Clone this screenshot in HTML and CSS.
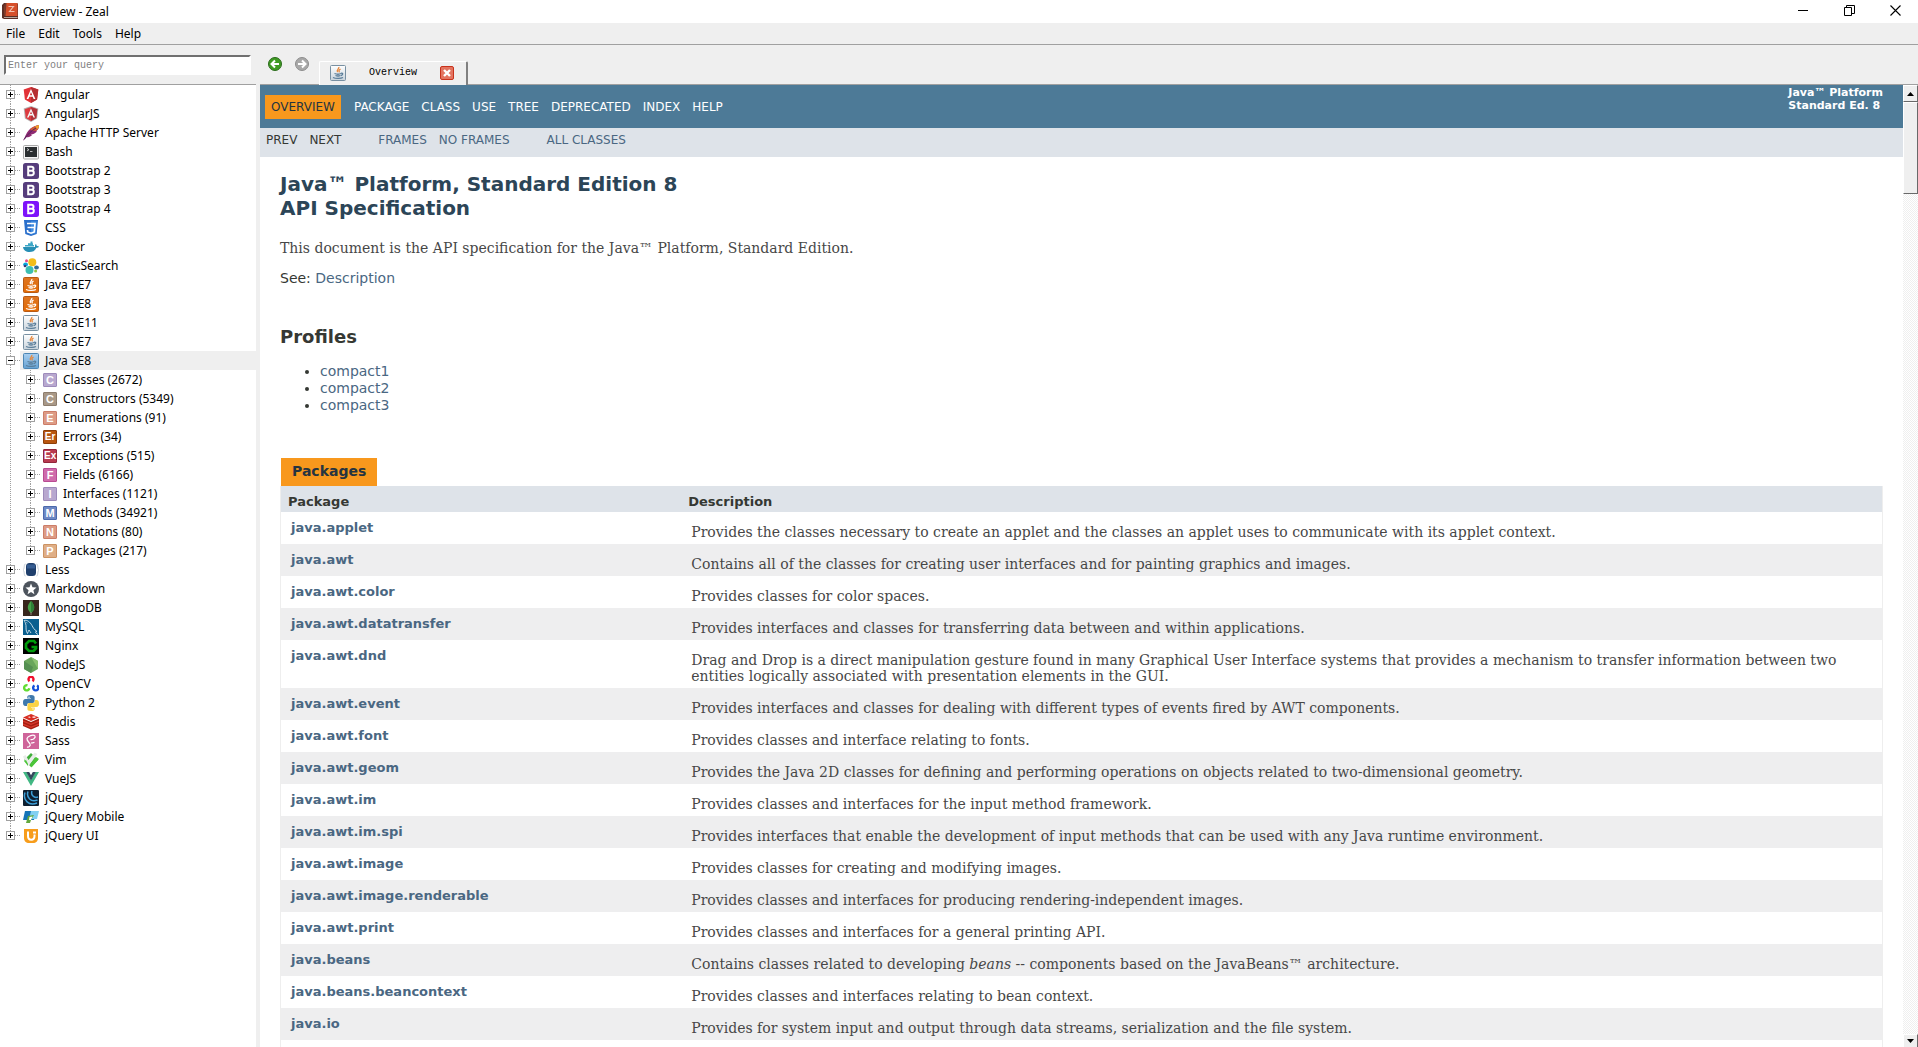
FILE: index.html
```html
<!DOCTYPE html>
<html lang="en">
<head>
<meta charset="utf-8">
<title>Overview - Zeal</title>
<link rel="stylesheet" href="styles.css">
</head>
<body>
<svg class="defs" aria-hidden="true">
  <defs>
    <symbol id="angular" viewBox="0 0 16 16"><path d="M8 0l7.300 2.600-1.200 10L8 16l-6.100-3.400-1.200-10z" fill="#e23237"/><path d="M8 0l7.300 2.600-1.200 10L8 16z" fill="#b52e31"/><path d="M8 2L3.600 12h1.800l.9-2.300h3.400l.9 2.300h1.800zM8 5.200l1.200 3H6.800z" fill="#fff"/></symbol>
    <symbol id="angularjs" viewBox="0 0 16 16"><path d="M8 0l7.300 2.600-1.200 10L8 16l-6.100-3.400-1.200-10z" fill="#b3b3b3"/><path d="M8 1l6.300 2.200-1.100 8.800L8 15l-5.200-3-1.100-8.800z" fill="#dd3b40"/><path d="M8 1l6.300 2.200-1.100 8.800L8 15z" fill="#b13138"/><path d="M8 2.500L4 11.500h1.600l.8-2h3.200l.8 2H12zM8 5.500l1 2.500H7z" fill="#f4f4f4"/></symbol>
    <symbol id="apache" viewBox="0 0 16 16"><path d="M0 16C2 12 3 8 6 5s6-4 10-5c0 3-1 5-3 6l1 .5c-2 2-4 3-6 3l1 .7c-2 1.800-4 2-5.500 2z" fill="#8e2a72"/><path d="M7 4c3-2.500 6-3.500 9-4 0 3-1 5-3 6-2-1-3 1-6-2z" fill="#cf5a35"/><path d="M12 1.500L16 0c0 2-.5 3-1.500 4z" fill="#f0a52a"/><path d="M1 14.500C5 9 8 6 13 3" stroke="#52235d" fill="none"/></symbol>
    <symbol id="bash" viewBox="0 0 16 16"><rect x=".5" y="1.500" width="15" height="13.500" rx="1" fill="#f5f5f5" stroke="#aaa"/><rect x="2" y="3" width="12" height="10" fill="#2b2f31"/><path d="M4 4.500l2 1.200-2 1.200M7 7.500h2.500" stroke="#ddd" stroke-width=".8" fill="none"/></symbol>
    <symbol id="boot" viewBox="0 0 16 16"><rect width="16" height="16" rx="2.500" fill="currentColor"/><path d="M5.200 3.800h3.300c2.600 0 2.600 3.600.4 4 2.700.3 2.500 4.400-.5 4.400H5.200zM5.200 7.800h4" fill="none" stroke="#fff" stroke-width="2"/></symbol>
    <symbol id="css" viewBox="0 0 16 16"><path d="M1 0h14l-1.300 14L8 16l-5.700-2z" fill="#2a6fcb"/><path d="M8 1.200h5.800l-1.200 12L8 14.700z" fill="#3f8ce0"/><path d="M4 3.500h8L11.300 12 8 13.200 4.700 12l-.2-2M4.500 7.500H11" fill="none" stroke="#fff" stroke-width="1.700"/></symbol>
    <symbol id="docker" viewBox="0 0 16 16"><path d="M0 8h12c0-1.500 0-2 .7-3 1 .8 1 1.500 1 2 .8-.2 1.700 0 2.300.4-.6 1-1.500 1.300-2.600 1.300C12 12 9.500 13 6.500 13 3 13 .5 11.500 0 8z" fill="#278fb5"/><path d="M2 6h9v1.600H2zM5 4.200h5V6H5zM7.500 2.500h2v2h-2z" fill="#3ca6c6"/></symbol>
    <symbol id="elastic" viewBox="0 0 16 16"><circle cx="9.300" cy="4.200" r="4" fill="#f4bd19"/><circle cx="6.500" cy="12" r="4" fill="#3cbeb1"/><ellipse cx="2.600" cy="6.500" rx="2.400" ry="2" fill="#07a5de"/><circle cx="3.500" cy="2.800" r="1.500" fill="#e8478b"/><ellipse cx="13.500" cy="9.500" rx="2.400" ry="2" fill="#336b9a"/><circle cx="12.600" cy="13" r="1.500" fill="#93c83e"/><circle cx="2" cy="8" r="1.300" fill="#353b7a"/></symbol>
    <symbol id="cup" viewBox="0 0 16 16"><path d="M8.800 2c.8 1.800-3 2.700-1.200 5M10.500 4c-1.800 1.200-2 1.800-1 3.300" fill="none" stroke="var(--steam)" stroke-width="1.300"/><path d="M4.500 8.500c2 .8 5 .8 6.500 0M5.500 10.500c1.600.6 3.500.6 5 0M11 8.300c2.500-.8 2 1.600 0 2.300M3 12.500c2.500 1.200 8 1.200 10 0" fill="none" stroke="var(--cup)" stroke-width="1.300"/></symbol>
    <linearGradient id="gee" x2="0" y2="1"><stop stop-color="#dd7522"/><stop offset="1" stop-color="#e36b04"/></linearGradient>
    <linearGradient id="gse" x2="0" y2="1"><stop stop-color="#fff"/><stop offset="1" stop-color="#c8d3dc"/></linearGradient>
    <linearGradient id="gsel" x2="0" y2="1"><stop stop-color="#a9cff0"/><stop offset="1" stop-color="#65a1d2"/></linearGradient>
    <symbol id="jee" viewBox="0 0 16 16"><rect x=".5" y=".5" width="15" height="15" rx="1" fill="url(#gee)" stroke="#b85a14"/><use href="#cup"/></symbol>
    <symbol id="jse" viewBox="0 0 16 16"><rect x=".5" y=".5" width="15" height="15" rx="1" fill="url(#gse)" stroke="#7890a2"/><use href="#cup"/></symbol>
    <symbol id="jsel" viewBox="0 0 16 16"><rect x=".5" y=".5" width="15" height="15" rx="1" fill="url(#gsel)" stroke="#4d86b4"/><use href="#cup"/></symbol>
    <symbol id="less" viewBox="0 0 16 16"><path d="M2.500 2C.5 2 2 7-.2 8 2 9 .5 14 2.500 14M13.500 2c2 0 .5 5 2.700 6-2.200 1-.7 6-2.700 6" fill="none" stroke="#c3ccd5"/><rect x="3" y="1" width="10" height="13" rx="3.500" fill="#1f3f6c"/><path d="M4 2.500h8v4H4z" fill="#365d92"/></symbol>
    <symbol id="markdown" viewBox="0 0 16 16"><circle cx="8" cy="8" r="8" fill="#4d545d"/><path d="M8 2.500l1.500 3.800 4 .3-3.100 2.600 1 4L8 11l-3.400 2.200 1-4-3.100-2.600 4-.3z" fill="#fff"/></symbol>
    <symbol id="mongo" viewBox="0 0 16 16"><path d="M0 0h16v16H0z" fill="#38271d"/><path d="M8 1c5 5 3.500 9.500 0 12C4.500 10.500 3 6 8 1z" fill="#47a248"/><path d="M8 1c5 5 3.500 9.500 0 12z" fill="#2f8137"/><path d="M8 12v3" stroke="#b8a99a" stroke-width=".7"/></symbol>
    <symbol id="mysql" viewBox="0 0 16 16"><path d="M0 0h16v16H0z" fill="#0a5f8f"/><path d="M1 1.500c3-1 6 1.500 8 5 1 2 2 4 5 6-1.500 0-2 .3-1 1.500l2 1.500M1 1.500c1 1.500 1.700 2.500 2 5 .2 2-.5 5 1.500 8C5 13 5.500 12 6 11c1 1 1 2 2 3M3.500 3.500l.8.500" fill="none" stroke="#d5e5ee" stroke-width=".9"/></symbol>
    <symbol id="nginx" viewBox="0 0 16 16"><path d="M0 0h16v16H0z"/><path d="M13 5.500L11 3H6L3 6v4l3 3h4.500L13 10.500V9H8.500" fill="none" stroke="#009c0c" stroke-width="2.700"/></symbol>
    <symbol id="node" viewBox="0 0 16 16"><path d="M8 0l7 4v8l-7 4-7-4V4z" fill="#6aa65b"/><path d="M8 0l7 4v8z" fill="#8cc271"/><path d="M1 4v8l7 4 2-6z" fill="#559052"/></symbol>
    <symbol id="opencv" viewBox="0 0 16 16"><g fill="none" stroke-width="2.400"><path d="M6.500 5.200a2.500 2.500 0 1 1 3 0" stroke="#f00f2c"/><path d="M4.500 9.300a2.600 2.600 0 1 0 1.800 3" stroke="#62dc32"/><path d="M11.500 9.500a2.600 2.600 0 1 0 2.500 0" stroke="#1450da"/></g></symbol>
    <symbol id="python" viewBox="0 0 16 16"><path d="M8 0c3 0 3.600 1 3.600 2.300V6c0 1.300-.8 2-2 2H6C4.500 8 4 9 4 11H2.400C.6 11 0 9.500 0 7.500S.7 4 2.500 4H8v-.6H4.300V2.300C4.300.8 5 0 8 0z" fill="#3f79ac"/><path d="M8 16c-3 0-3.600-1-3.600-2.300V10c0-1.300.8-2 2-2H10c1.500 0 2-1 2-3h1.600C15.400 5 16 6.500 16 8.500S15.300 12 13.500 12H8v.6h3.700v1.100C11.700 15.200 11 16 8 16z" fill="#fbd345"/><circle cx="6" cy="2.200" r=".7" fill="#fff"/><circle cx="10" cy="14" r=".7" fill="#fff"/></symbol>
    <symbol id="redis" viewBox="0 0 16 16"><path d="M0 4.500L8 8l8-3.500V12l-8 3.500L0 12z" fill="#a41e11"/><path d="M0 3.500L8 0l8 3.500L8 7z" fill="#d82c20"/><path d="M0 7l8 3.400L16 7M0 10l8 3.400 8-3.400" fill="none" stroke="#d9382c" stroke-width="1.200"/><path d="M4.500 3l3 1L7 2.600zM9.500 2.500h3v1.200h-3z" fill="#fff"/></symbol>
    <symbol id="sass" viewBox="0 0 16 16"><path d="M0 0h16v16H0z" fill="#cf649a"/><path d="M4 14c1.500.5 4-1.200 3-3S3.600 7.500 4 5.500C4.600 3 10.500 1 12 3c1 1.700-2.500 4.200-4.500 3.500M8 10c1 0 2-.2 3.500-.8" fill="none" stroke="#fff" stroke-width="1.200"/></symbol>
    <symbol id="vim" viewBox="0 0 16 16"><path d="M8 1l7 7-7 7-7-7z" fill="#3fae3a"/><path d="M0 4.500L2.500 3l3 5L11.500.5 14.500 2 6 13.500H4.500z" fill="#e9ece9"/><path d="M1 9l2-1 2 4v2zM7 12.500L13 5l3 2-7.500 8.500z" fill="#4cc63a"/></symbol>
    <symbol id="vue" viewBox="0 0 16 16"><path d="M0 1h3.500L8 9l4.500-8H16L8 15z" fill="#41b883"/><path d="M3.200 1h3L8 4.200 9.800 1h3L8 9.500z" fill="#35495e"/></symbol>
    <symbol id="jq" viewBox="0 0 16 16"><rect width="16" height="16" rx="1" fill="#0e1f30"/><path d="M2 2.500C-.5 10 6 16.500 14 13M5 1.500C3 7.500 8 12.500 14.500 10M9 1C7.500 5 11 8.500 15 7" fill="none" stroke="#3d9fd8" stroke-width="1.500"/></symbol>
    <symbol id="jqm" viewBox="0 0 16 16"><path d="M2 2h11l-2 9H0z" fill="#1474b8"/><path d="M8 2h8l-2 8H6z" fill="#83d0f2"/><path d="M5 7l6-1-3 5-1 3H3z" fill="#62a83c"/><path d="M6.500 8l3-.5L8 11H6z" fill="#fff"/></symbol>
    <symbol id="jqui" viewBox="0 0 16 16"><path d="M1 1h14v9c0 3-2 5-5 5H6c-3 0-5-2-5-5z" fill="#f79d1c"/><path d="M5 3.500V8c0 5 6.500 5 6.500 0V6.500" fill="none" stroke="#fff" stroke-width="2"/><path d="M10 3.500h3v2h-3z" fill="#fff"/></symbol>
    <symbol id="zeal" viewBox="0 0 16 17"><path d="M2 0h13l1 1v15H2L0 15V2z" fill="#5c2f26"/><path d="M3 0h12.500v13H2z" fill="#d6502b"/><path d="M3 0h1.500L3.500 13H2z" fill="#74392c"/><path d="M2 14h13.500v1H2z" fill="#b9a79c"/><path d="M6.500 3.500h5L7.500 8.500h5" fill="none" stroke="#f3c3b0" stroke-width="1.100"/></symbol>
  </defs>
</svg>

<header class="titlebar">
  <svg class="app-icon"><use href="#zeal"/></svg>
  <span class="title">Overview - Zeal</span>
  <div class="window-buttons">
    <button aria-label="Minimize"><svg viewBox="0 0 11 11"><path d="M0 5.500h10" stroke="#000"/></svg></button>
    <button aria-label="Restore"><svg viewBox="0 0 11 11"><path d="M.5 2.500h7v8h-7zM2.500 2.500v-2h8v8h-3" fill="none" stroke="#000"/></svg></button>
    <button aria-label="Close"><svg viewBox="0 0 11 11"><path d="M.5.5l10 10M10.500.5l-10 10" stroke="#000" stroke-width="1.100"/></svg></button>
  </div>
</header>
<nav class="menubar" aria-label="Menu">
  <button>File</button><button>Edit</button><button>Tools</button><button>Help</button>
</nav>

<div class="workspace">
  <aside class="sidebar">
    <div class="search"><input type="text" placeholder="Enter your query" aria-label="Search"></div>
    <ul class="tree">
      <li><div class="row"><button class="exp" aria-label="Expand"></button><svg class="ico"><use href="#angular"/></svg><span>Angular</span></div></li>
      <li><div class="row"><button class="exp" aria-label="Expand"></button><svg class="ico"><use href="#angularjs"/></svg><span>AngularJS</span></div></li>
      <li><div class="row"><button class="exp" aria-label="Expand"></button><svg class="ico"><use href="#apache"/></svg><span>Apache HTTP Server</span></div></li>
      <li><div class="row"><button class="exp" aria-label="Expand"></button><svg class="ico"><use href="#bash"/></svg><span>Bash</span></div></li>
      <li><div class="row"><button class="exp" aria-label="Expand"></button><svg class="ico boot-old"><use href="#boot"/></svg><span>Bootstrap 2</span></div></li>
      <li><div class="row"><button class="exp" aria-label="Expand"></button><svg class="ico boot-old"><use href="#boot"/></svg><span>Bootstrap 3</span></div></li>
      <li><div class="row"><button class="exp" aria-label="Expand"></button><svg class="ico boot-new"><use href="#boot"/></svg><span>Bootstrap 4</span></div></li>
      <li><div class="row"><button class="exp" aria-label="Expand"></button><svg class="ico"><use href="#css"/></svg><span>CSS</span></div></li>
      <li><div class="row"><button class="exp" aria-label="Expand"></button><svg class="ico"><use href="#docker"/></svg><span>Docker</span></div></li>
      <li><div class="row"><button class="exp" aria-label="Expand"></button><svg class="ico"><use href="#elastic"/></svg><span>ElasticSearch</span></div></li>
      <li><div class="row"><button class="exp" aria-label="Expand"></button><svg class="ico ee"><use href="#jee"/></svg><span>Java EE7</span></div></li>
      <li><div class="row"><button class="exp" aria-label="Expand"></button><svg class="ico ee"><use href="#jee"/></svg><span>Java EE8</span></div></li>
      <li><div class="row"><button class="exp" aria-label="Expand"></button><svg class="ico"><use href="#jse"/></svg><span>Java SE11</span></div></li>
      <li><div class="row"><button class="exp" aria-label="Expand"></button><svg class="ico"><use href="#jse"/></svg><span>Java SE7</span></div></li>
      <li><div class="row selected"><button class="exp open" aria-label="Collapse"></button><svg class="ico"><use href="#jsel"/></svg><span>Java SE8</span></div>
        <ul>
          <li><div class="row"><button class="exp" aria-label="Expand"></button><i class="kind lilac">C</i><span>Classes (2672)</span></div></li>
          <li><div class="row"><button class="exp" aria-label="Expand"></button><i class="kind taupe">C</i><span>Constructors (5349)</span></div></li>
          <li><div class="row"><button class="exp" aria-label="Expand"></button><i class="kind salmon">E</i><span>Enumerations (91)</span></div></li>
          <li><div class="row"><button class="exp" aria-label="Expand"></button><i class="kind brown">Er</i><span>Errors (34)</span></div></li>
          <li><div class="row"><button class="exp" aria-label="Expand"></button><i class="kind crimson">Ex</i><span>Exceptions (515)</span></div></li>
          <li><div class="row"><button class="exp" aria-label="Expand"></button><i class="kind pink">F</i><span>Fields (6166)</span></div></li>
          <li><div class="row"><button class="exp" aria-label="Expand"></button><i class="kind lilac">I</i><span>Interfaces (1121)</span></div></li>
          <li><div class="row"><button class="exp" aria-label="Expand"></button><i class="kind blue">M</i><span>Methods (34921)</span></div></li>
          <li><div class="row"><button class="exp" aria-label="Expand"></button><i class="kind salmon">N</i><span>Notations (80)</span></div></li>
          <li><div class="row"><button class="exp" aria-label="Expand"></button><i class="kind sand">P</i><span>Packages (217)</span></div></li>
        </ul>
      </li>
      <li><div class="row"><button class="exp" aria-label="Expand"></button><svg class="ico"><use href="#less"/></svg><span>Less</span></div></li>
      <li><div class="row"><button class="exp" aria-label="Expand"></button><svg class="ico"><use href="#markdown"/></svg><span>Markdown</span></div></li>
      <li><div class="row"><button class="exp" aria-label="Expand"></button><svg class="ico"><use href="#mongo"/></svg><span>MongoDB</span></div></li>
      <li><div class="row"><button class="exp" aria-label="Expand"></button><svg class="ico"><use href="#mysql"/></svg><span>MySQL</span></div></li>
      <li><div class="row"><button class="exp" aria-label="Expand"></button><svg class="ico"><use href="#nginx"/></svg><span>Nginx</span></div></li>
      <li><div class="row"><button class="exp" aria-label="Expand"></button><svg class="ico"><use href="#node"/></svg><span>NodeJS</span></div></li>
      <li><div class="row"><button class="exp" aria-label="Expand"></button><svg class="ico"><use href="#opencv"/></svg><span>OpenCV</span></div></li>
      <li><div class="row"><button class="exp" aria-label="Expand"></button><svg class="ico"><use href="#python"/></svg><span>Python 2</span></div></li>
      <li><div class="row"><button class="exp" aria-label="Expand"></button><svg class="ico"><use href="#redis"/></svg><span>Redis</span></div></li>
      <li><div class="row"><button class="exp" aria-label="Expand"></button><svg class="ico"><use href="#sass"/></svg><span>Sass</span></div></li>
      <li><div class="row"><button class="exp" aria-label="Expand"></button><svg class="ico"><use href="#vim"/></svg><span>Vim</span></div></li>
      <li><div class="row"><button class="exp" aria-label="Expand"></button><svg class="ico"><use href="#vue"/></svg><span>VueJS</span></div></li>
      <li><div class="row"><button class="exp" aria-label="Expand"></button><svg class="ico"><use href="#jq"/></svg><span>jQuery</span></div></li>
      <li><div class="row"><button class="exp" aria-label="Expand"></button><svg class="ico"><use href="#jqm"/></svg><span>jQuery Mobile</span></div></li>
      <li><div class="row"><button class="exp" aria-label="Expand"></button><svg class="ico"><use href="#jqui"/></svg><span>jQuery UI</span></div></li>
    </ul>
  </aside>

  <section class="viewer">
    <div class="tabs">
      <button class="nav" aria-label="Back"><svg viewBox="0 0 14 14"><circle cx="7" cy="7" r="6.500" fill="#3f9a24" stroke="#2b6b1c"/><path d="M11 7H4M7 3.500L3.500 7 7 10.500" fill="none" stroke="#fff" stroke-width="2"/></svg></button>
      <button class="nav" aria-label="Forward"><svg viewBox="0 0 14 14"><circle cx="7" cy="7" r="6.500" fill="#a8a8a8" stroke="#8d8d8d"/><path d="M3 7h7M7 3.500L10.500 7 7 10.500" fill="none" stroke="#fff" stroke-width="2"/></svg></button>
      <div class="tab">
        <svg class="ico"><use href="#jse"/></svg>
        <span>Overview</span>
        <button class="close" aria-label="Close tab"><svg viewBox="0 0 14 14"><rect x=".5" y=".5" width="13" height="13" rx="1.500" fill="#e37460" stroke="#c8321c"/><path d="M4 4l6 6M10 4l-6 6" stroke="#fff" stroke-width="2.400"/></svg></button>
      </div>
    </div>
    <div class="view">
      <main class="doc">
        <nav class="topnav">
          <ul>
            <li class="current">Overview</li><li>Package</li><li>Class</li><li>Use</li><li><a href="#tree">Tree</a></li><li><a href="#deprecated">Deprecated</a></li><li><a href="#index">Index</a></li><li><a href="#help">Help</a></li>
          </ul>
          <strong>Java™ Platform<br>Standard Ed. 8</strong>
        </nav>
        <nav class="subnav">
          <ul><li>Prev</li><li>Next</li></ul>
          <ul><li><a href="#frames">Frames</a></li><li><a href="#noframes">No Frames</a></li></ul>
          <ul><li><a href="#all">All Classes</a></li></ul>
        </nav>
        <div class="body">
          <h1>Java™ Platform, Standard Edition 8<br>API Specification</h1>
          <p class="block">This document is the API specification for the Java™ Platform, Standard Edition.</p>
          <p class="see">See: <a href="#description">Description</a></p>
          <h2>Profiles</h2>
          <ul class="profiles">
            <li><a href="#compact1">compact1</a></li>
            <li><a href="#compact2">compact2</a></li>
            <li><a href="#compact3">compact3</a></li>
          </ul>
          <table>
            <caption><span>Packages</span></caption>
            <thead><tr><th>Package</th><th>Description</th></tr></thead>
            <tbody>
              <tr><td><a href="#p1">java.applet</a></td><td>Provides the classes necessary to create an applet and the classes an applet uses to communicate with its applet context.</td></tr>
              <tr><td><a href="#p2">java.awt</a></td><td>Contains all of the classes for creating user interfaces and for painting graphics and images.</td></tr>
              <tr><td><a href="#p3">java.awt.color</a></td><td>Provides classes for color spaces.</td></tr>
              <tr><td><a href="#p4">java.awt.datatransfer</a></td><td>Provides interfaces and classes for transferring data between and within applications.</td></tr>
              <tr><td><a href="#p5">java.awt.dnd</a></td><td>Drag and Drop is a direct manipulation gesture found in many Graphical User Interface systems that provides a mechanism to transfer information between two entities logically associated with presentation elements in the GUI.</td></tr>
              <tr><td><a href="#p6">java.awt.event</a></td><td>Provides interfaces and classes for dealing with different types of events fired by AWT components.</td></tr>
              <tr><td><a href="#p7">java.awt.font</a></td><td>Provides classes and interface relating to fonts.</td></tr>
              <tr><td><a href="#p8">java.awt.geom</a></td><td>Provides the Java 2D classes for defining and performing operations on objects related to two-dimensional geometry.</td></tr>
              <tr><td><a href="#p9">java.awt.im</a></td><td>Provides classes and interfaces for the input method framework.</td></tr>
              <tr><td><a href="#p10">java.awt.im.spi</a></td><td>Provides interfaces that enable the development of input methods that can be used with any Java runtime environment.</td></tr>
              <tr><td><a href="#p11">java.awt.image</a></td><td>Provides classes for creating and modifying images.</td></tr>
              <tr><td><a href="#p12">java.awt.image.renderable</a></td><td>Provides classes and interfaces for producing rendering-independent images.</td></tr>
              <tr><td><a href="#p13">java.awt.print</a></td><td>Provides classes and interfaces for a general printing API.</td></tr>
              <tr><td><a href="#p14">java.beans</a></td><td>Contains classes related to developing <em>beans</em> -- components based on the JavaBeans™ architecture.</td></tr>
              <tr><td><a href="#p15">java.beans.beancontext</a></td><td>Provides classes and interfaces relating to bean context.</td></tr>
              <tr><td><a href="#p16">java.io</a></td><td>Provides for system input and output through data streams, serialization and the file system.</td></tr>
              <tr><td></td><td></td></tr>
            </tbody>
          </table>
        </div>
      </main>
      <div class="scrollbar">
        <button aria-label="Scroll up"><svg viewBox="0 0 7 4"><path d="M0 4h7L3.500 0z"/></svg></button>
        <div class="thumb"></div>
        <div class="track"></div>
        <button class="down" aria-label="Scroll down"><svg viewBox="0 0 7 4"><path d="M0 0h7L3.500 4z"/></svg></button>
      </div>
    </div>
  </section>
</div>
</body>
</html>
```
FILE: styles.css
```css
* { box-sizing: border-box; }

html, body { height: 100%; }

body {
  margin: 0;
  display: flex;
  flex-direction: column;
  overflow: hidden;
  background: #efefef;
  color: #000;
  font: 12px/16px "Noto Sans", sans-serif;
}

button {
  padding: 0;
  border: 0;
  background: none;
  color: inherit;
  font: inherit;
}

ul { margin: 0; padding: 0; list-style: none; }
a { color: #4a6782; text-decoration: none; }
svg { display: block; }
.defs { position: absolute; width: 0; height: 0; }

/* Window frame */
.titlebar {
  display: flex;
  align-items: center;
  height: 23px;
  flex: none;
  padding-left: 2px;
  background: #fff;
}
.app-icon { width: 16px; height: 17px; }
.title { margin-left: 5px; }
.window-buttons { display: flex; align-self: flex-start; margin-left: auto; }
.window-buttons button { width: 46px; height: 21px; display: grid; place-items: center; }
.window-buttons svg { width: 11px; height: 11px; }

.menubar {
  display: flex;
  gap: 13px;
  flex: none;
  height: 22px;
  padding: 0 6px;
  border-bottom: 1px solid #a0a0a0;
}

.workspace {
  display: grid;
  grid-template-columns: 256px minmax(0, 1fr);
  column-gap: 4px;
  flex: 1;
  min-height: 0;
}

/* Docset tree */
.sidebar { display: flex; flex-direction: column; min-height: 0; }
.search { height: 39px; flex: none; padding: 10px 5px 0 4px; }
.search input {
  display: block;
  width: 100%;
  height: 20px;
  padding: 0 2px;
  border: 2px solid;
  border-color: #707070 #fff #fff #707070;
  background: #fff;
  font: 10px/14px "Liberation Mono", monospace;
}
.search input::placeholder { color: #7f7f7f; opacity: 1; }

.tree {
  flex: 1;
  overflow: hidden;
  border-top: 1px solid #a0a0a0;
  background: #fff;
}
.tree li {
  background: repeating-linear-gradient(#a0a0a0 0 1px, transparent 1px 2px) 10px 0 / 1px 100% no-repeat;
}
.tree li li { margin-left: 20px; }
.tree li:last-child { background-size: 1px 9px; }
.row { display: flex; align-items: center; height: 19px; padding-left: 6px; }
.row span { margin-left: 6px; white-space: nowrap; }
.selected { background: linear-gradient(#efefef, #efefef) 20px 0 no-repeat; }
.exp {
  width: 9px;
  height: 9px;
  border: 1px solid #a0a0a0;
  background:
    linear-gradient(#000, #000) center / 5px 1px no-repeat,
    linear-gradient(#000, #000) center / 1px 5px no-repeat,
    #fff;
}
.exp.open { background: linear-gradient(#000, #000) center / 5px 1px no-repeat, #fff; }
.exp::after { content: ""; display: block; width: 5px; margin-left: 8px; border-top: 1px dotted #a0a0a0; }
.ico { width: 16px; height: 16px; flex: none; margin-left: 8px; --steam: #e8873a; --cup: #5a7d99; }
.ee { --steam: #fff; --cup: #fff; }
.boot-old { color: #563d7c; }
.boot-new { color: #7d12fa; }

.kind {
  width: 14px;
  height: 14px;
  margin-left: 8px;
  border: 1px solid;
  border-radius: 1px;
  color: #fff;
  font: bold 11px/12px "Liberation Sans", sans-serif;
  text-align: center;
}
.lilac { background: #b8a8cf; border-color: #9d8bbb; }
.taupe { background: #a89887; border-color: #8d7d6d; }
.salmon { background: #dd9b85; border-color: #cc7d68; }
.brown { background: #b8560f; border-color: #8d3f08; font-size: 10px; }
.crimson { background: #b83a50; border-color: #92263b; font-size: 10px; }
.pink { background: #cf6bab; border-color: #b84b92; }
.blue { background: #6d88c4; border-color: #4b69ac; }
.sand { background: #dfae86; border-color: #cc9262; }

/* Tab strip */
.viewer { display: flex; flex-direction: column; min-width: 0; min-height: 0; }
.tabs { display: flex; height: 40px; flex: none; padding-left: 8px; background: linear-gradient(#a0a0a0, #a0a0a0) bottom / 100% 1px no-repeat; }
.nav { align-self: flex-start; margin: 12px 13px 0 0; }
.nav svg, .close svg { width: 14px; height: 14px; }
.tab {
  display: flex;
  align-items: center;
  width: 149px;
  margin: 16px 0 0 -3px;
  padding: 0 12px 1px 2px;
  border: solid #fff;
  border-width: 1px 2px 0 1px;
  border-right-color: #808080;
  border-radius: 2px 2px 0 0;
  background: #efefef;
  font: 10px/14px "Liberation Mono", monospace;
}
.tab span { flex: 1; text-align: center; }

/* Documentation page */
.view { display: flex; flex: 1; min-height: 0; }
.doc {
  flex: 1;
  min-width: 0;
  overflow: hidden;
  background: #fff;
  color: #353833;
  font: 14px/17px "DejaVu Sans", sans-serif;
}
.topnav {
  display: flex;
  justify-content: space-between;
  height: 43px;
  padding-left: 5px;
  background: #4d7a97;
  color: #fff;
  font-size: 12px;
  line-height: 14px;
  text-transform: uppercase;
}
.topnav ul { display: flex; padding-top: 10px; }
.topnav li { height: 24px; padding: 5px 6px; }
.topnav .current { margin-right: 7px; background: #f8981d; color: #253441; }
.topnav a { color: #fff; }
.topnav strong { padding: 1px 20px 0 0; font-size: 11px; line-height: 13px; text-transform: none; }
.subnav {
  display: flex;
  gap: 25px;
  height: 29px;
  background: #dee3e9;
  font-size: 12px;
  line-height: 14px;
  text-transform: uppercase;
}
.subnav ul { display: flex; }
.subnav li { padding: 5px 6px; }

.body { padding: 15px 20px 0; }
h1 { margin: 0 0 20px; color: #2c4557; font-size: 20px; line-height: 24px; }
h2 { margin: 0 0 15px; font-size: 18px; line-height: 22px; }
p { margin: 0; }
.block { margin-bottom: 14px; color: #474747; font-family: "DejaVu Serif", serif; line-height: 16px; }
.see { margin-bottom: 39px; }
.profiles { margin-bottom: 44px; padding-left: 40px; list-style: disc; }

table {
  width: 100%;
  table-layout: fixed;
  border-collapse: separate;
  border-spacing: 0;
  border: solid #eee;
  border-width: 0 1px;
}
caption { text-align: left; }
caption span {
  display: inline-block;
  height: 28px;
  margin-left: 1px;
  padding: 5px 11px;
  vertical-align: top;
  background: #f8981d;
  color: #253441;
  font-weight: bold;
}
th {
  height: 26px;
  padding: 8px 7px 3px;
  background: #dee3e9;
  font-size: 13px;
  line-height: 15px;
  text-align: left;
}
th:first-child { width: 25%; }
td { padding: 12px 4px 4px 10px; vertical-align: top; color: #474747; font: 14px/16px "DejaVu Serif", serif; height: 32px; }
td:first-child { padding-top: 8px; font: bold 13px/15px "DejaVu Sans", sans-serif; }
tbody tr:nth-child(even) { background: #eeeeef; }

.scrollbar { display: flex; flex-direction: column; width: 15px; flex: none; }
.scrollbar button, .thumb {
  flex: none;
  border: 1px solid;
  border-color: #fff #696969 #696969 #fff;
  background: #efefef;
}
.scrollbar button { display: grid; place-items: center; height: 17px; }
.scrollbar .down { height: 13px; border-bottom: 0; }
.scrollbar svg { width: 7px; height: 4px; }
.thumb { height: 92px; }
.track { flex: 1; background: repeating-conic-gradient(#efefef 0 25%, #fff 0 50%) 0 0 / 2px 2px; }
```
